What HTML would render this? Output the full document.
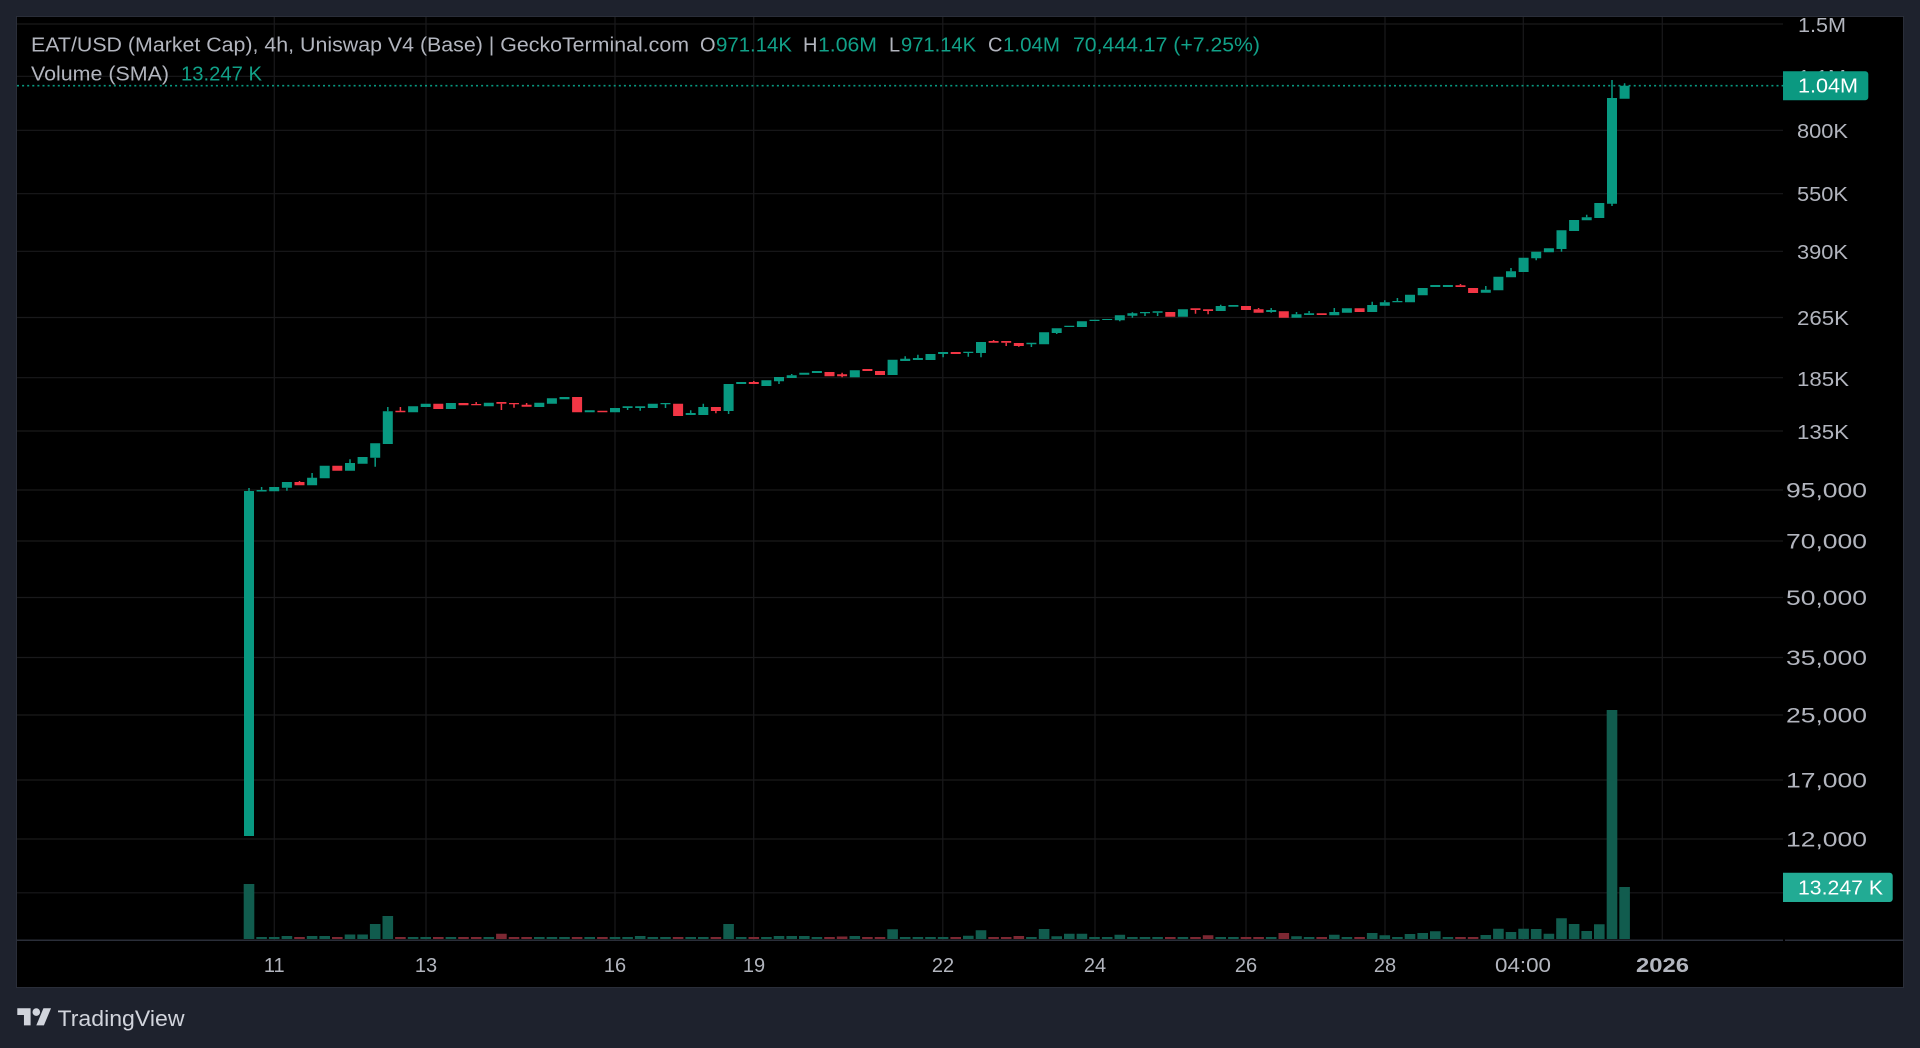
<!DOCTYPE html>
<html lang="en">
<head>
<meta charset="utf-8">
<title>EAT/USD (Market Cap) - TradingView</title>
<style>
html,body{margin:0;padding:0;background:#1e222d;width:1920px;height:1048px;overflow:hidden}
svg{display:block}
text{font-family:"Liberation Sans",sans-serif;font-size:20px}
.a{fill:#b2b5be}
.g{fill:#11a188}
.w{fill:#fff}
.n{font-size:21px}
</style>
</head>
<body>
<svg width="1920" height="1048" viewBox="0 0 1920 1048" xmlns="http://www.w3.org/2000/svg">
<rect width="1920" height="1048" fill="#1e222d"/>
<rect x="16.5" y="16.5" width="1887" height="971" fill="#000" stroke="#2a2e39"/>

<!-- grid -->
<path fill="none" stroke="#19191b" stroke-width="1.2" d="M17 24H1783M17 76.3H1783M17 130.3H1783M17 193.7H1783M17 251.3H1783M17 317.5H1783M17 377.7H1783M17 431H1783M17 490H1783M17 541H1783M17 597.5H1783M17 657.5H1783M17 715H1783M17 780H1783M17 839H1783M17 892.8H1783M274.3 17V940M426 17V940M615 17V940M753.7 17V940M942.8 17V940M1095 17V940M1246 17V940M1385 17V940M1523.3 17V940M1662.3 17V940"/>

<!-- volume -->
<path fill="none" stroke="#115c4e" stroke-width="10.6" d="M249 939V884M261.6 939V937M274.2 939V937M286.9 939V936M312.1 939V936M324.7 939V936M350 939V934.5M362.6 939V934.5M375.2 939V924M387.8 939V916M413.1 939V937M425.7 939V937M450.9 939V937M488.8 939V937M539.3 939V937M551.9 939V937M564.5 939V937M589.7 939V937M615 939V937M627.6 939V937M640.2 939V936M652.8 939V937M665.5 939V937M690.7 939V937M703.3 939V937M728.6 939V924M741.2 939V937M766.4 939V937M779 939V936M791.7 939V936M804.3 939V936M816.9 939V937M854.8 939V936M892.6 939V929.3M905.2 939V937M917.9 939V937M930.5 939V937M943.1 939V937M968.3 939V935.7M981 939V930.3M1031.4 939V937M1044.1 939V929M1056.7 939V936.3M1069.3 939V933.7M1081.9 939V933.7M1094.5 939V937M1107.2 939V937M1119.8 939V934.7M1132.4 939V937M1145 939V937M1157.6 939V937M1182.9 939V937M1220.7 939V937M1233.4 939V937M1271.2 939V937M1296.5 939V936.3M1309.1 939V937M1334.3 939V934.7M1346.9 939V937M1372.2 939V933M1384.8 939V935.3M1397.4 939V937M1410 939V934M1422.7 939V933M1435.3 939V931.3M1447.9 939V937M1485.8 939V935M1498.4 939V928.7M1511 939V932M1523.6 939V928.7M1536.2 939V929M1548.9 939V933.7M1561.5 939V918.3M1574.1 939V924M1586.7 939V931M1599.3 939V924.3M1612 939V710M1624.6 939V887"/>
<path fill="none" stroke="#7d2833" stroke-width="10.6" d="M299.5 939V937M337.3 939V937M400.4 939V937M438.3 939V937M463.5 939V937M476.2 939V937M501.4 939V933.7M514 939V937M526.6 939V937M577.1 939V937M602.4 939V937M678.1 939V937M715.9 939V937M753.8 939V937M829.5 939V937M842.1 939V936.5M867.4 939V937M880 939V937M955.7 939V937M993.6 939V937M1006.2 939V937M1018.8 939V936M1170.3 939V937M1195.5 939V937M1208.1 939V935.3M1246 939V937M1258.6 939V937M1283.8 939V933M1321.7 939V937M1359.6 939V937M1460.5 939V937M1473.1 939V937"/>

<!-- axis separator -->
<path fill="none" stroke="#2a2e39" stroke-width="1.5" d="M17 940.3H1783M1785 940.3H1903"/>

<!-- wicks -->
<path fill="none" stroke="#089981" stroke-width="1.5" d="M249 488V491M261.6 487V490M286.9 487.7V490.7M312.1 473V478M350 459.3V463M375.2 457.7V466.7M387.8 407V411.3M627.6 408V410M640.2 408V410.7M665.5 404V408M690.7 410.3V413M703.3 403.7V407M728.6 411V414M779 381V384M791.7 374V375.3M905.2 356.3V359M917.9 354.7V358M943.1 354V357.3M968.3 353V356.7M981 353V357.3M1031.4 344V347M1056.7 333V334M1119.8 320V321.3M1132.4 312.3V317.7M1145 313V316M1157.6 312.7V316M1220.7 304.7V306M1271.2 308V312.7M1296.5 312V314.3M1309.1 311V313.3M1334.3 308V312M1372.2 301.7V305M1384.8 300.3V302.3M1397.4 298V301M1485.8 286V289.7M1511 268V271.3M1536.2 258V260.3M1561.5 249V251.7M1586.7 214.7V217.3M1612 80V98M1612 203V206M1624.6 83.3V86"/>
<path fill="none" stroke="#f23645" stroke-width="1.5" d="M299.5 481V482M400.4 407V411M476.2 402V404M501.4 403.7V410M514 404V407.7M526.6 403V405M715.9 411V413.3M753.8 381V382M842.1 372.7V377.3M993.6 340V341M1006.2 342.7V346M1018.8 346V346.7M1195.5 310V313.7M1208.1 311V314.3M1258.6 308V309.3M1460.5 284V285.3"/>

<!-- bodies -->
<path fill="none" stroke="#089981" stroke-width="10" d="M249 491V836M261.6 490V491.5M274.2 487V491.3M286.9 482V487.7M312.1 477.7V485.3M324.7 465.7V478.3M350 463V470.7M362.6 457V463.7M375.2 443.3V457.7M387.8 411.3V444M413.1 406.3V412.3M425.7 403.7V407M450.9 403V409M488.8 402.7V406.3M539.3 402.7V407M551.9 398.3V403.7M564.5 397V399.3M589.7 410.3V412.3M615 408V412.3M627.6 406.3V408M640.2 406.3V408M652.8 403.7V408M665.5 403V404.3M690.7 413V415M703.3 407V415M728.6 384V411M741.2 382V384M766.4 380.3V386M779 377V381.3M791.7 375.3V378M804.3 372.7V374.7M816.9 371V373M854.8 370.3V377.3M892.6 359.7V375M905.2 358.7V361M917.9 358V360M930.5 354V360M943.1 352V354M968.3 351.7V353M981 342V353M1031.4 342.7V344.3M1044.1 332.3V344.3M1056.7 328.3V333M1069.3 325.7V327M1081.9 321.3V327M1094.5 319.7V321M1107.2 319V320M1119.8 315.3V320.3M1132.4 313.3V315.7M1145 312V313.3M1157.6 311.3V312.7M1182.9 309.3V316.7M1220.7 306V311M1233.4 305V306.7M1271.2 310V312M1296.5 314.3V317.7M1309.1 313.3V315M1334.3 312V315.3M1346.9 308.3V312.7M1372.2 305V312M1384.8 302.3V305.7M1397.4 301V302.3M1410 294.7V302.3M1422.7 288V295.3M1435.3 285V287M1447.9 285V287M1485.8 289.7V292.7M1498.4 276.7V290.3M1511 271.3V277.3M1523.6 257.7V272M1536.2 251.7V258.3M1548.9 248.3V252.3M1561.5 230.3V249M1574.1 220V231M1586.7 217.3V220.3M1599.3 203V218M1612 98V203.7M1624.6 85.7V98.7"/>
<path fill="none" stroke="#f23645" stroke-width="10" d="M299.5 482V485.3M337.3 465.7V470.7M400.4 410.7V412.3M438.3 403.7V409M463.5 403V405.3M476.2 404V405.3M501.4 402V403.7M514 403V404.3M526.6 404.7V406.7M577.1 397V412.3M602.4 410.7V412.3M678.1 403.7V416M715.9 407V411M753.8 382V384M829.5 372V376.3M842.1 374.3V376.3M867.4 369V371M880 371V375M955.7 352V354M993.6 341V342.7M1006.2 341V342.7M1018.8 343V346M1170.3 312V316.7M1195.5 308.3V310M1208.1 309.3V311M1246 306V310M1258.6 309.3V312.7M1283.8 311.3V317.7M1321.7 313.3V315M1359.6 308.3V312M1460.5 285.3V287M1473.1 288V293"/>

<!-- last price dotted line -->
<path fill="none" stroke="#089981" stroke-width="1.6" stroke-dasharray="2 3.1" d="M17 85.7H1783"/>

<!-- legend -->
<text class="a" x="31" y="51.5" textLength="658" lengthAdjust="spacingAndGlyphs">EAT/USD (Market Cap), 4h, Uniswap V4 (Base) | GeckoTerminal.com</text>
<text class="a" x="700" y="51.5">O</text>
<text class="g" x="716" y="51.5" textLength="76" lengthAdjust="spacingAndGlyphs">971.14K</text>
<text class="a" x="803" y="51.5">H</text>
<text class="g" x="818" y="51.5" textLength="59" lengthAdjust="spacingAndGlyphs">1.06M</text>
<text class="a" x="889" y="51.5">L</text>
<text class="g" x="901" y="51.5" textLength="75" lengthAdjust="spacingAndGlyphs">971.14K</text>
<text class="a" x="988" y="51.5">C</text>
<text class="g" x="1003" y="51.5" textLength="57" lengthAdjust="spacingAndGlyphs">1.04M</text>
<text class="g" x="1073" y="51.5" textLength="187" lengthAdjust="spacingAndGlyphs">70,444.17 (+7.25%)</text>
<text class="a" x="31" y="80.5" textLength="138" lengthAdjust="spacingAndGlyphs">Volume (SMA)</text>
<text class="g" x="181" y="80.5" textLength="81" lengthAdjust="spacingAndGlyphs">13.247 K</text>

<!-- price axis -->
<g class="a">
<text class="a" x="1798" y="32" textLength="48" lengthAdjust="spacingAndGlyphs">1.5M</text>
<text class="a" x="1798" y="84" textLength="48" lengthAdjust="spacingAndGlyphs">1.1M</text>
<text class="a" x="1797" y="138" textLength="51" lengthAdjust="spacingAndGlyphs">800K</text>
<text class="a" x="1797" y="201" textLength="51" lengthAdjust="spacingAndGlyphs">550K</text>
<text class="a" x="1797" y="259" textLength="51" lengthAdjust="spacingAndGlyphs">390K</text>
<text class="a" x="1797" y="325" textLength="52" lengthAdjust="spacingAndGlyphs">265K</text>
<text class="a" x="1797" y="386" textLength="52" lengthAdjust="spacingAndGlyphs">185K</text>
<text class="a" x="1797" y="439" textLength="52" lengthAdjust="spacingAndGlyphs">135K</text>
<text class="a n" x="1786" y="497.5" textLength="81" lengthAdjust="spacingAndGlyphs">95,000</text>
<text class="a n" x="1786" y="548.5" textLength="81" lengthAdjust="spacingAndGlyphs">70,000</text>
<text class="a n" x="1786" y="605" textLength="81" lengthAdjust="spacingAndGlyphs">50,000</text>
<text class="a n" x="1786" y="665" textLength="81" lengthAdjust="spacingAndGlyphs">35,000</text>
<text class="a n" x="1786" y="722.5" textLength="81" lengthAdjust="spacingAndGlyphs">25,000</text>
<text class="a n" x="1786" y="787.5" textLength="81" lengthAdjust="spacingAndGlyphs">17,000</text>
<text class="a n" x="1786" y="846.5" textLength="81" lengthAdjust="spacingAndGlyphs">12,000</text>
</g>

<!-- price tags -->
<path fill="#0b9981" d="M1783 71.3H1865.3a3 3 0 0 1 3 3V97.3a3 3 0 0 1-3 3H1783Z"/>
<text class="w" x="1798" y="92.5" textLength="60" lengthAdjust="spacingAndGlyphs">1.04M</text>
<path fill="#22ab94" d="M1783 872.7H1889.7a3 3 0 0 1 3 3V899a3 3 0 0 1-3 3H1783Z"/>
<text class="w" x="1798" y="894.5" textLength="85" lengthAdjust="spacingAndGlyphs">13.247 K</text>

<!-- time axis -->
<text class="a" x="274.3" y="972" text-anchor="middle">11</text>
<text class="a" x="426" y="972" text-anchor="middle">13</text>
<text class="a" x="615" y="972" text-anchor="middle">16</text>
<text class="a" x="754" y="972" text-anchor="middle">19</text>
<text class="a" x="943" y="972" text-anchor="middle">22</text>
<text class="a" x="1095" y="972" text-anchor="middle">24</text>
<text class="a" x="1246" y="972" text-anchor="middle">26</text>
<text class="a" x="1385" y="972" text-anchor="middle">28</text>
<text class="a" x="1523" y="972" text-anchor="middle" textLength="56" lengthAdjust="spacingAndGlyphs">04:00</text>
<text class="a" x="1662.5" y="972" text-anchor="middle" textLength="53" lengthAdjust="spacingAndGlyphs" style="font-weight:700">2026</text>

<!-- TradingView logo -->
<g fill="#d1d4dc" transform="translate(17.3,1008.3) scale(.95)">
<path d="M14 18H7V7H0V0H14Z"/>
<circle cx="20" cy="4" r="4"/>
<path d="M28 18H20L27.5 0H35.5Z"/>
</g>
<text x="57.5" y="1026" fill="#d1d4dc" style="font-size:22px" textLength="127" lengthAdjust="spacingAndGlyphs">TradingView</text>
</svg>
</body>
</html>
